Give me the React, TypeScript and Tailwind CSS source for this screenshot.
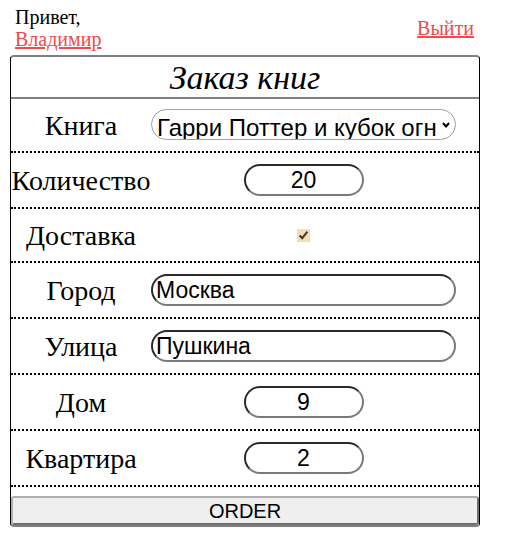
import React from "react";

const serif = "font-['Liberation_Serif','Times_New_Roman',serif]";
const sans = "font-['Liberation_Sans',Arial,sans-serif]";

function Row({ label, children, h = "h-[56px]" }: { label: string; children: React.ReactNode; h?: string }) {
  return (
    <div className={`grid grid-cols-[140px_305px_1fr] items-center border-b-2 border-dotted border-black ${h}`}>
      <div className={`${serif} text-[28px] text-black text-center leading-none whitespace-nowrap pt-[2px]`}>{label}</div>
      <div className="flex justify-center items-center">{children}</div>
      <div />
    </div>
  );
}

const pill =
  "h-[32px] rounded-full border-2 border-t-[#2a2a2a] border-l-[#2a2a2a] border-r-[#7a7a7a] border-b-[#7a7a7a] bg-white text-black text-[23px] outline-none " +
  sans;

export default function App() {
  return (
    <div className="w-[518px] h-[545px] bg-white">
      <div className="ml-[10px] w-[470px]">
        <div className={`flex justify-between items-center pl-[5px] pr-[6px] pt-[5px] h-[50px] ${serif} text-[20px] leading-[22px]`}>
          <div>
            <div className="text-black">Привет,</div>
            <a href="#" className="text-[#ef4b4b] underline">Владимир</a>
          </div>
          <a href="#" className="text-[#ef4b4b] underline">Выйти</a>
        </div>
        <div className="mt-[5px] rounded-[4px] border-y-2 border-x border-y-[#808080] border-x-black">
          <div className={`h-[42px] flex items-center justify-center ${serif} italic text-[34px] text-black border-b-2 border-[#808080]`}>
            Заказ книг
          </div>
          <Row label="Книга" h="h-[54px]">
            <div className="relative w-[305px]">
              <select
                defaultValue="hp"
                className={`w-full h-[31px] appearance-none rounded-full border border-[#a0a0a0] bg-white pl-[5px] pr-[19px] text-[24px] text-black ${sans} outline-none`}
              >
                <option value="hp">Гарри Поттер и кубок огня</option>
              </select>
              <svg className="absolute right-[6px] top-[13px] pointer-events-none" width="8" height="6" viewBox="0 0 8 6">
                <path d="M1 1 L4 4.5 L7 1" fill="none" stroke="black" strokeWidth="2" />
              </svg>
            </div>
          </Row>
          <Row label="Количество">
            <input defaultValue="20" className={`${pill} w-[120px] text-center`} />
          </Row>
          <Row label="Доставка" h="h-[54px]">
            <input type="checkbox" defaultChecked className="w-[13px] h-[13px] accent-[#f5deb3]" />
          </Row>
          <Row label="Город">
            <input defaultValue="Москва" className={`${pill} w-[305px] pl-[3px]`} />
          </Row>
          <Row label="Улица">
            <input defaultValue="Пушкина" className={`${pill} w-[305px] pl-[3px]`} />
          </Row>
          <Row label="Дом">
            <input defaultValue="9" className={`${pill} w-[120px] text-center`} />
          </Row>
          <Row label="Квартира">
            <input defaultValue="2" className={`${pill} w-[120px] text-center`} />
          </Row>
          <div className="pt-[9px]">
            <button
              className={`w-full h-[29px] rounded-[3px] border-2 border-t-[#b0b0b0] border-l-[#b0b0b0] border-r-[#6f6f6f] border-b-[#6f6f6f] bg-[#efefef] text-[20px] text-black ${sans} leading-none`}
            >
              ORDER
            </button>
          </div>
        </div>
      </div>
    </div>
  );
}
